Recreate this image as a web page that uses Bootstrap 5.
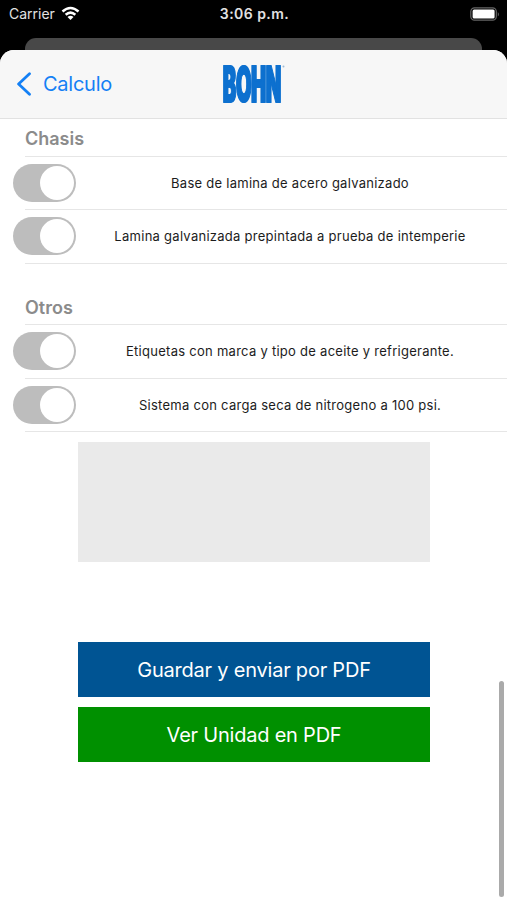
<!DOCTYPE html>
<html lang="es">
<head>
<meta charset="utf-8">
<meta name="viewport" content="width=device-width, initial-scale=1">
<title>Calculo</title>
<link href="https://cdn.jsdelivr.net/npm/bootstrap@5.3.0/dist/css/bootstrap.min.css" rel="stylesheet">
<style>
body{font-family:Inter,"Liberation Sans",sans-serif;background:#000;height:900px;overflow:hidden}
.status{height:38px;color:#e2e2e2;font-size:14px;line-height:20px;padding:4px 7px 0 9px}
.status>*{flex:1 1 0}
.status .wifi{margin:2px 0 0 6px}
.status .battery{margin-top:3px}
.clock{font-weight:600;font-size:14px;letter-spacing:.45px}
.behind{height:12px;margin:0 25px;background:#484848;border-radius:11px 11px 0 0}
.sheet{height:850px;background:#fff;border-radius:14px 14px 0 0;overflow:hidden}
.topbar{height:69px;background:#f7f7f7;border-bottom:1px solid #e2e2e2;padding:0 17px 0 16px}
.topbar>*{flex:1 1 0}
.brand{overflow:visible}
.brand text{filter:drop-shadow(1px 0 0 #0d70cf)}
.back{color:#1480f5;font-size:20px;letter-spacing:-.25px;gap:11px}
.heading{margin:0 0 0 25px;color:#8b8b8b;font-size:18px;font-weight:600;line-height:22px;border-bottom:1px solid #e6e6e6}
.chasis{height:38px;padding-top:9px}
.otros{height:61px;padding-top:33px}
.option{height:54px;padding:0 3px 2px 13px;position:relative}
.option.short{height:53px}
.option::after{content:"";position:absolute;left:25px;right:0;bottom:0;border-bottom:1px solid #e6e6e6}
.toggle{width:63px;height:38px;border-radius:19px;background:#bdbdbd;border:0;padding:0 2px 0 0;flex:none}
.knob{width:34px;height:34px;border-radius:50%;background:#fff}
.caption{font-size:13px;letter-spacing:.27px;color:#1c1c1c;white-space:nowrap;padding-top:2px}
.lower{width:352px;margin-left:78px}
.notes{height:120px;background:#eaeaea;margin-top:10px;margin-bottom:80px;display:block;width:100%;border:0;resize:none}
.action{height:55px;border:0;border-radius:0;color:#fff;font-size:20px;letter-spacing:-.22px;padding:0}
.save{background:#005493;margin-bottom:10px}
.view{background:#009000}
.scroller{position:absolute;left:499px;top:681px;width:5px;height:216px;background:#aaa;border-radius:3px}
</style>
<script src="https://cdn.jsdelivr.net/npm/bootstrap@5.3.0/dist/js/bootstrap.bundle.min.js"></script>
</head>
<body>
<div class="status d-flex">
  <div class="d-flex"><span>Carrier</span>
    <svg width="19" height="14" viewBox="0 0 20 15" class="wifi"><g fill="none" stroke="#fff" stroke-width="2.7"><path d="M1.4 5.9Q10-1.6 18.6 5.9"/><path d="M4.8 9.4Q10 4.8 15.2 9.4"/></g><path d="M10 15L6.8 11.7Q10 9.2 13.2 11.7Z" fill="#fff"/></svg>
  </div>
  <div class="clock text-center">3:06 p.m.</div>
  <div><svg width="30" height="14" viewBox="0 0 30 14" class="battery d-block ms-auto"><rect x=".8" y=".8" width="25.5" height="12.4" rx="3.7" fill="none" stroke="#666" stroke-width="1.2"/><rect x="2.6" y="2.4" width="22" height="9.2" rx="1.5" fill="#fff"/><path d="M27.8 5v4.5Q30 7.3 27.8 5" fill="#666"/></svg></div>
</div>
<div class="behind"></div>
<main class="sheet">
  <header class="topbar d-flex align-items-center">
    <a class="back d-flex align-items-center text-decoration-none" href="#"><svg width="16" height="24" viewBox="0 0 16 24"><path d="M13.5 1.8L2.6 12L13.5 22.2" fill="none" stroke="#1480f5" stroke-width="2.8" stroke-linecap="round" stroke-linejoin="round"/></svg><span>Calculo</span></a>
    <div><svg width="64" height="44" viewBox="0 0 64 44" class="brand d-block mx-auto"><text x="1.6" y="40" font-family="Inter" font-weight="800" font-size="49.5" textLength="58" lengthAdjust="spacingAndGlyphs" fill="#0d70cf" stroke="#0d70cf" stroke-width="2.2">BOHN</text><circle cx="62.5" cy="4.5" r="1" fill="#9dbbd8"/></svg></div>
    <div></div>
  </header>
  <h2 class="heading chasis">Chasis</h2>
  <div class="option short d-flex align-items-center"><button class="toggle d-flex align-items-center justify-content-end" role="switch" aria-checked="true"><span class="knob"></span></button><span class="caption flex-fill text-center">Base de lamina de acero galvanizado</span></div>
  <div class="option d-flex align-items-center"><button class="toggle d-flex align-items-center justify-content-end" role="switch" aria-checked="true"><span class="knob"></span></button><span class="caption flex-fill text-center">Lamina galvanizada prepintada a prueba de intemperie</span></div>
  <h2 class="heading otros">Otros</h2>
  <div class="option d-flex align-items-center"><button class="toggle d-flex align-items-center justify-content-end" role="switch" aria-checked="true"><span class="knob"></span></button><span class="caption flex-fill text-center">Etiquetas con marca y tipo de aceite y refrigerante.</span></div>
  <div class="option short d-flex align-items-center"><button class="toggle d-flex align-items-center justify-content-end" role="switch" aria-checked="true"><span class="knob"></span></button><span class="caption flex-fill text-center">Sistema con carga seca de nitrogeno a 100 psi.</span></div>
  <div class="lower">
    <textarea class="notes" aria-label="Notas"></textarea>
    <button class="btn action save w-100 d-block"><span>Guardar y enviar por PDF</span></button>
    <button class="btn action view w-100 d-block"><span>Ver Unidad en PDF</span></button>
  </div>
</main>
<div class="scroller"></div>
</body>
</html>
